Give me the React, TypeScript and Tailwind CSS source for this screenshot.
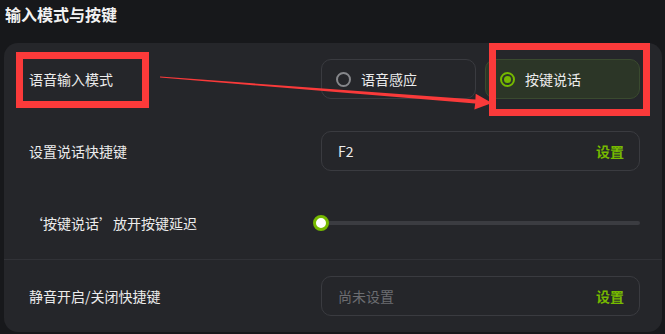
import React from "react";

const font = { fontFamily: '"Noto Sans CJK SC", "Noto Sans", sans-serif' };

// Radio option pill
const RadioOption = ({ label, checked }: { label: string; checked?: boolean }) => (
  <div
    className={
      checked
        ? "flex h-[40px] flex-1 items-center gap-[10px] rounded-[10px] border border-[#3a4a2f] bg-[#2c3627] pl-[14px]"
        : "flex h-[40px] flex-1 items-center gap-[10px] rounded-[10px] border border-[#3a3b40] pl-[14px]"
    }
  >
    {checked ? (
      <span className="flex h-[15px] w-[15px] items-center justify-center rounded-full border-2 border-[#76b900]">
        <span className="h-[7px] w-[7px] rounded-full bg-[#76b900]" />
      </span>
    ) : (
      <span className="h-[15px] w-[15px] rounded-full border-2 border-[#86878b]" />
    )}
    <span className="text-[14px] text-[#ececec]">{label}</span>
  </div>
);

// Shortcut input box
const KeyBox = ({ value, placeholder }: { value?: string; placeholder?: string }) => (
  <div className="flex h-[40px] w-[319px] items-center justify-between rounded-[10px] border border-[#3a3b40] pl-[16px] pr-[15px]">
    {value ? (
      <span className="text-[14px] text-[#ececec]">{value}</span>
    ) : (
      <span className="text-[14px] text-[#6c6d71]">{placeholder}</span>
    )}
    <span className="text-[14px] font-bold text-[#76b900]">设置</span>
  </div>
);

const Row = ({ label, children }: { label: string; children: React.ReactNode }) => (
  <div className="flex h-[40px] items-center justify-between">
    <span className="text-[14px] text-[#ececec]">{label}</span>
    {children}
  </div>
);

export default function App() {
  return (
    <div className="relative h-[334px] w-[665px] overflow-hidden bg-[#17181b]" style={font}>
      {/* Title */}
      <div className="h-[43px] pl-[5px] pt-[3px] text-[16px] font-bold leading-[22px] text-[#f2f2f2]">
        输入模式与按键
      </div>

      {/* Card */}
      <div className="ml-[4px] w-[658px] rounded-[14px] bg-[#25262a]">
        <div className="flex flex-col gap-[32px] pl-[25px] pr-[22px] pt-[16px] pb-[16px]">
          <Row label="语音输入模式">
            <div className="flex w-[319px] gap-[9px]">
              <RadioOption label="语音感应" />
              <RadioOption label="按键说话" checked />
            </div>
          </Row>
          <Row label="设置说话快捷键">
            <KeyBox value="F2" />
          </Row>
          <Row label="‘按键说话’放开按键延迟">
            <div className="relative flex h-[40px] w-[319px] items-center">
              <div className="h-[4px] w-full rounded-full bg-[#3b3c41]" />
              <span className="absolute left-[-8px] top-[12px] h-[16px] w-[16px] rounded-full border-[3px] border-[#76b900] bg-white" />
            </div>
          </Row>
        </div>
        <div className="border-t border-[#313237]" />
        <div className="pl-[25px] pr-[22px] pt-[16px] pb-[16px]">
          <Row label="静音开启/关闭快捷键">
            <KeyBox placeholder="尚未设置" />
          </Row>
        </div>
      </div>

      {/* Red annotations */}
      <div className="absolute left-[16px] top-[52px] h-[56px] w-[133px] border-[7px] border-[#fa3a3a]" />
      <div className="absolute left-[489px] top-[43px] h-[73px] w-[161px] border-[7px] border-[#fa3a3a]" />
      <svg className="absolute left-0 top-0" width="665" height="334" viewBox="0 0 665 334">
        <polygon
          points="160,76.5 160,77.5 475.2,103.6 474.4,109.6 492,103 475.7,93.7 475.4,99.6"
          fill="#fa3a3a"
        />
      </svg>
    </div>
  );
}
